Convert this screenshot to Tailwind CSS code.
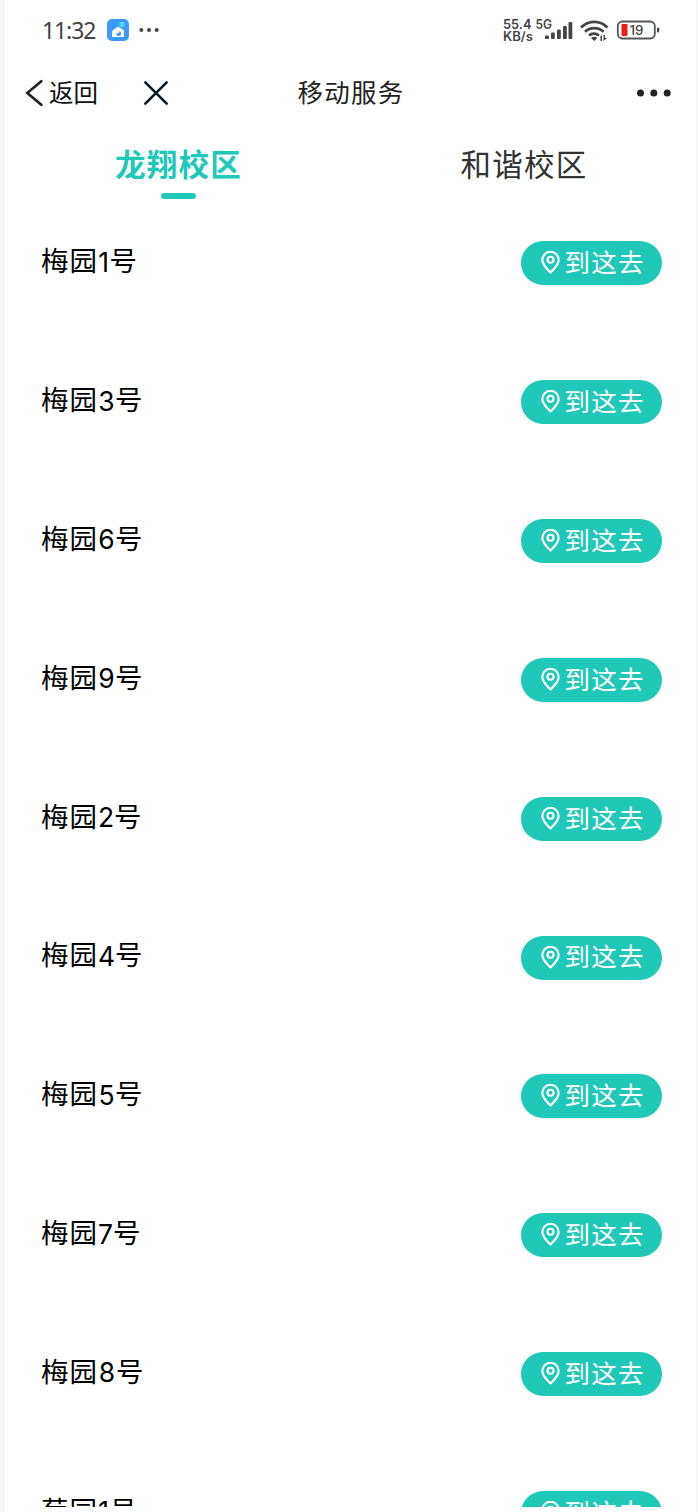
<!DOCTYPE html>
<html lang="zh-CN">
<head>
<meta charset="utf-8">
<title>移动服务</title>
<script src="https://cdn.jsdelivr.net/npm/@tailwindcss/browser@4"></script>
</head>
<body class="bg-white">
<div class="flex h-[1512px] w-[698px] flex-col overflow-hidden border-l-[5px] border-r-2 border-[#f7f7f7] bg-white font-['Inter','Noto_Sans_CJK_SC',sans-serif]">
  <header class="flex h-[60px] shrink-0 items-center pl-[37px] pr-[35.500px] text-[#444]">
    <span class="w-[54px] whitespace-nowrap font-['Noto_Sans','Noto_Sans_CJK_SC',sans-serif] text-[23px] leading-none tracking-[-1.100px]">11:32</span>
    <svg class="ml-[11px]" width="22" height="22" viewBox="0 0 22 22"><rect width="22" height="22" rx="5" fill="#3b9afc"/><path d="M5.500 12 11 8l5.500 3.500V17.500h-11z" fill="#fff" stroke="#fff" stroke-linejoin="round"/><circle cx="15" cy="5.500" r="2.800" fill="#53d6f4"/><path d="M9 14.500a2.600 2.600 0 1 0 3.500-2.500c.2 1.800-1.500 3-3.500 2.500z" fill="#3b9afc"/></svg>
    <svg class="ml-[10px]" width="22" height="6" viewBox="0 0 22 6" fill="#444"><circle cx="2.300" cy="3" r="2"/><circle cx="10" cy="3" r="2"/><circle cx="17.700" cy="3" r="2"/></svg>
    <svg class="ml-auto" width="158" height="28" viewBox="0 0 158 28" fill="#444">
      <g font-family="Inter, sans-serif" font-weight="600">
        <text x="0" y="13" font-size="13.500" textLength="28.500" lengthAdjust="spacingAndGlyphs">55.4</text>
        <text x="0" y="25" font-size="12.500" textLength="30" lengthAdjust="spacingAndGlyphs">KB/s</text>
        <text x="32.500" y="13" font-size="12.500" textLength="16.500" lengthAdjust="spacingAndGlyphs">5G</text>
      </g>
      <rect x="42" y="19.500" width="4" height="3.500" rx="1"/><rect x="48" y="16.500" width="3.800" height="6.500" rx="1"/><rect x="54" y="13.500" width="3.800" height="9.500" rx="1"/><rect x="60" y="10" width="3.800" height="13" rx="1"/><rect x="65.500" y="6" width="3.800" height="17" rx="1"/>
      <g fill="none" stroke="#444" stroke-width="2.800"><path d="M78 11.500a18.500 18.500 0 0 1 26.500 0"/><path d="M82 15.800a13.500 13.500 0 0 1 18.500 0"/><path d="M86 19.500a8 8 0 0 1 10 0"/></g>
      <path d="M88 22q3.200-2.300 6.400 0L91.200 25zM97 21l2-2v6h-1.500v-3zM100.500 19h1.500v3h2.200l-3.700 3z"/>
      <rect x="114.800" y="5.500" width="37" height="17" rx="4.500" fill="none" stroke="#555" stroke-width="1.800"/>
      <rect x="118.500" y="8" width="6" height="12" rx="1" fill="#e91c1c"/><rect x="154" y="11.500" width="2.200" height="5" rx="1"/>
      <text x="126.500" y="18.800" font-family="Inter, sans-serif" font-size="13.500" font-weight="500" textLength="14" lengthAdjust="spacingAndGlyphs">19</text>
    </svg>
  </header>
  <nav class="grid h-[66px] shrink-0 grid-cols-3 items-center text-[#222]">
    <div class="flex items-center pl-[20px]">
      <svg width="18" height="28" viewBox="0 0 18 28" fill="none" stroke="#222" stroke-width="2.700" stroke-linecap="round"><path d="M16.300 2.300 2.300 14l14 11.800"/></svg>
      <span class="ml-[6px] whitespace-nowrap text-[24.500px] leading-none text-[#111]">返回</span>
      <svg class="ml-[45px]" width="26" height="26" viewBox="0 0 26 26" fill="none" stroke="#061a28" stroke-width="2.600" stroke-linecap="round"><path d="m2.300 2.300 21.400 21.400M23.700 2.300 2.300 23.700"/></svg>
    </div>
    <h1 class="whitespace-nowrap pl-px text-center text-[25.500px] leading-none tracking-[1.200px]">移动服务</h1>
    <svg class="mr-[23px] justify-self-end" width="38" height="8" viewBox="0 0 38 8" fill="#222"><circle cx="5.500" cy="4" r="3.500"/><circle cx="18.800" cy="4" r="3.500"/><circle cx="32.200" cy="4" r="3.500"/></svg>
  </nav>
  <div class="grid h-[68px] shrink-0 grid-cols-2 pl-px text-[30.500px] leading-none tracking-[1.200px]">
    <div class="flex flex-col items-center pt-[24px] font-bold text-[#20c9b7]"><span>龙翔校区</span><i class="mt-[12.500px] h-[5.500px] w-[35px] rounded-full bg-[#20c9b7]"></i></div>
    <div class="flex flex-col items-center pl-px pt-[24px] text-[#333]"><span>和谐校区</span></div>
  </div>
  <main id="list" class="h-[1313px] shrink-0 overflow-hidden"></main>
</div>
<template id="row">
  <div class="flex h-[138.850px] items-center justify-between pl-[36px] pr-[34.500px]">
    <div class="flex items-center pb-[3px] text-[27.500px] leading-none text-black"><span data-name class="tracking-[1px]"></span><span data-digit class="text-center text-[26.500px]"></span><span>号</span></div>
    <button class="flex h-[44px] w-[140.500px] items-center rounded-full bg-[#20c9b7] pb-px pl-[20px] text-[25.500px] leading-none tracking-[1.200px] text-white">
      <svg class="mr-[4.500px] shrink-0" width="19" height="23" viewBox="0 0 19 23" fill="none" stroke="#fff" stroke-width="2.100"><path d="M9.500 21.500C5 17 1.300 13.300 1.300 9a8.200 8.200 0 0 1 16.400 0c0 4.300-3.700 8-8.200 12.500z" stroke-linejoin="round"/><circle cx="9.500" cy="8.700" r="3"/></svg>
      <span class="whitespace-nowrap">到这去</span>
    </button>
  </div>
</template>
<script>
const list = document.getElementById('list');
const row = document.getElementById('row');
const widths = {1: 11.5, 2: 16, 3: 17, 4: 17, 5: 17, 6: 17, 7: 15, 8: 18, 9: 17};
[['梅园',1],['梅园',3],['梅园',6],['梅园',9],['梅园',2],['梅园',4],['梅园',5],['梅园',7],['梅园',8],['菊园',1]].forEach(([name, n]) => {
  const r = row.content.cloneNode(true);
  r.querySelector('[data-name]').textContent = name;
  const d = r.querySelector('[data-digit]');
  d.textContent = n;
  d.style.width = widths[n] + 'px';
  list.appendChild(r);
});
</script>
</body>
</html>
